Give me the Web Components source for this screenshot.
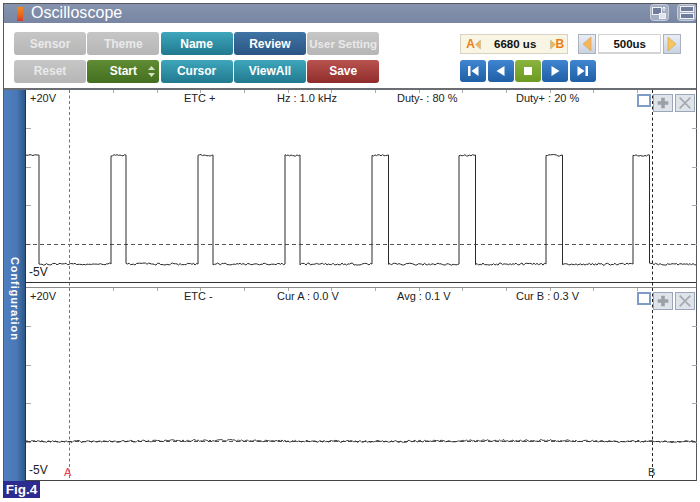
<!DOCTYPE html>
<html>
<head>
<meta charset="utf-8">
<title>Oscilloscope</title>
<style>
  html, body { margin: 0; padding: 0; background: #fff; }
  body { font-family: "Liberation Sans", Arial, sans-serif; }
</style>
</head>
<body>
<osc-window>
  <osc-titlebar slot="title">Oscilloscope</osc-titlebar>
  <osc-toolbar slot="toolbar">
    <osc-btn tone="gray">Sensor</osc-btn>
    <osc-btn tone="gray">Theme</osc-btn>
    <osc-btn tone="teal">Name</osc-btn>
    <osc-btn tone="navy">Review</osc-btn>
    <osc-btn tone="gray" small>User Setting</osc-btn>
    <osc-btn tone="gray">Reset</osc-btn>
    <osc-btn tone="green" spin>Start</osc-btn>
    <osc-btn tone="teal">Cursor</osc-btn>
    <osc-btn tone="teal">ViewAll</osc-btn>
    <osc-btn tone="red">Save</osc-btn>
    <osc-controls slot="right"></osc-controls>
  </osc-toolbar>
  <osc-scope slot="scope">
    <osc-plot kind="pulse">
      <span>+20V</span><span>ETC +</span><span>Hz : 1.0 kHz</span><span>Duty- : 80 %</span><span>Duty+ : 20 %</span>
    </osc-plot>
    <osc-plot kind="flat">
      <span>+20V</span><span>ETC -</span><span>Cur A : 0.0 V</span><span>Avg : 0.1 V</span><span>Cur B : 0.3 V</span>
    </osc-plot>
  </osc-scope>
</osc-window>
<fig-tag>Fig.4</fig-tag>

<script>
class OscWindow extends HTMLElement {
  constructor() {
    super();
    this.attachShadow({mode: "open"}).innerHTML = `
      <style>
        :host { display: block; width: 694px; height: 478px; margin: 3px 0 0 3px; box-sizing: border-box;
                border: solid #55585f; border-width: 1px 1px 0 1px; background: #fff; }
        .wrap { display: flex; flex-direction: column; height: 100%; }
      </style>
      <div class="wrap">
        <slot name="title"></slot>
        <slot name="toolbar"></slot>
        <slot name="scope"></slot>
      </div>`;
  }
}

class OscTitlebar extends HTMLElement {
  constructor() {
    super();
    this.attachShadow({mode: "open"}).innerHTML = `
      <style>
        :host { display: flex; align-items: center; height: 19px; flex: none; box-sizing: border-box;
                background: linear-gradient(#8593ae, #7886a3); color: #fff; font-size: 16px; padding-left: 13px; }
        .icon { width: 6px; height: 14px; margin-right: 8px; margin-top: 1px;
                background: linear-gradient(#f08a1e, #e8641c 60%, #d8392a); }
        .text { flex: 1; letter-spacing: 0.05px; margin-top: -1px; }
        .tools { display: flex; gap: 8px; margin-right: 0; align-self: flex-start; }
        svg { display: block; }
      </style>
      <span class="icon"></span>
      <span class="text"><slot></slot></span>
      <span class="tools">
        <svg width="19" height="17" viewBox="0 0 19 17">
          <rect x="0.5" y="0.5" width="18" height="16" rx="3" fill="#a4aec3" stroke="#c6ccd9"/>
          <rect x="2.5" y="3.5" width="9" height="7" fill="#6f7d9a" stroke="#eef1f6"/>
          <rect x="9.5" y="9.5" width="6" height="5" fill="#dfe4ee" stroke="#eef1f6"/>
          <path d="M14 3v4M12.5 4.5 14 3l1.5 1.5" fill="none" stroke="#fff"/>
        </svg>
        <svg width="19" height="17" viewBox="0 0 19 17">
          <rect x="0.5" y="0.5" width="18" height="16" rx="3" fill="#a4aec3" stroke="#c6ccd9"/>
          <rect x="3.5" y="2.5" width="13" height="5" fill="#6f7d9a" stroke="#eef1f6"/>
          <rect x="3.5" y="9.5" width="13" height="5" fill="#6f7d9a" stroke="#eef1f6"/>
        </svg>
      </span>`;
  }
}

class OscToolbar extends HTMLElement {
  constructor() {
    super();
    this.attachShadow({mode: "open"}).innerHTML = `
      <style>
        :host { display: flex; flex: none; height: 67px; box-sizing: border-box; padding: 9px 0 0 10px;
                border-bottom: 2px solid #6a6d72; }
        .grid { display: grid; grid-template-columns: repeat(5, 72px); grid-auto-rows: 23px; column-gap: 1.3px; row-gap: 4.5px; }
        .right { margin-left: 81px; }
      </style>
      <div class="grid"><slot></slot></div>
      <div class="right"><slot name="right"></slot></div>`;
  }
}

const TONES = {
  gray: "linear-gradient(#c6c6c6, #b6b6b6)",
  teal: "linear-gradient(#3ea6bb, #21798f)",
  navy: "linear-gradient(#3f74a4, #2a5583)",
  green: "linear-gradient(#5f8c33, #446f20)",
  red: "linear-gradient(#b9534e, #8f2c2b)"
};

class OscBtn extends HTMLElement {
  constructor() {
    super();
    const tone = this.getAttribute("tone") || "gray";
    const colour = tone == "gray" ? "#e9e9e9" : "#fff";
    const size = this.hasAttribute("small") ? "11.5px" : "12px";
    const spin = this.hasAttribute("spin")
      ? `<svg class="spin" width="7" height="11" viewBox="0 0 7 11"><path d="M3.5 0 7 4H0zM0 7h7l-3.5 4z" fill="#d5e0c4"/></svg>` : "";
    this.attachShadow({mode: "open"}).innerHTML = `
      <style>
        :host { display: flex; align-items: center; justify-content: center; position: relative; border-radius: 3px;
                font-size: ${size}; font-weight: bold; color: ${colour}; background: ${TONES[tone]}; white-space: nowrap; overflow: hidden; }
        .spin { position: absolute; right: 4px; top: 6px; }
      </style>
      <slot></slot>${spin}`;
  }
}

class OscControls extends HTMLElement {
  constructor() {
    super();
    const arrow = (dir, c) => `<svg width="12" height="16" viewBox="0 0 12 16"><path d="${dir == "l" ? "M10 1 2 8l8 7z" : "M2 1l8 7-8 7z"}" fill="${c}" stroke="#c9a060" stroke-width=".6"/></svg>`;
    const small = (dir) => `<svg width="6" height="11" viewBox="0 0 6 11"><path d="${dir == "l" ? "M5.5 1 .5 5.5l5 4.5z" : "M.5 1l5 4.5-5 4.5z"}" fill="#f0b45a" stroke="#b9b08c" stroke-width=".5"/></svg>`;
    const icons = {
      first: `<path d="M8 6h2.5v10H8zM18.5 6v10l-7-5z" fill="#fff"/>`,
      prev: `<path d="M16.5 6v10l-8-5z" fill="#fff"/>`,
      stop: `<rect x="9" y="7" width="8" height="8" fill="#fff"/>`,
      next: `<path d="M9.5 6v10l8-5z" fill="#fff"/>`,
      last: `<path d="M7.5 6v10l7-5zM15.5 6H18v10h-2.5z" fill="#fff"/>`
    };
    const play = (name, tone) => `<button class="${tone}"><svg width="26" height="22" viewBox="0 0 26 22">${icons[name]}</svg></button>`;
    this.attachShadow({mode: "open"}).innerHTML = `
      <style>
        :host { display: flex; flex-direction: column; gap: 6px; padding-top: 2px; font-weight: bold; font-size: 11.5px; color: #111; }
        .row { display: flex; align-items: center; height: 20px; }
        .ab { display: flex; align-items: center; width: 108px; height: 20px; box-sizing: border-box; padding: 0 3px 0 5px;
              background: #f8f5e4; border: 1px solid #d6d3c0; }
        .ab b { color: #ef7d14; font-size: 12px; font-weight: bold; }
        .ab .val { flex: 1; text-align: center; }
        .step { width: 18px; height: 20px; box-sizing: border-box; display: flex; align-items: center; justify-content: center;
                background: linear-gradient(#e9eef5, #c9d2e0); border: 1px solid #aab2c0; margin-left: 10px; }
        .val2 { width: 63px; height: 20px; box-sizing: border-box; margin: 0 2px; text-align: center; line-height: 18px; border: 1px solid #d4d4d4; border-bottom-width: 2px; }
        .step.r { margin-left: 0; }
        .play { display: flex; gap: 1.4px; height: 22px; }
        button { width: 26px; height: 22px; padding: 0; border: 0; border-radius: 3px; display: block; }
        button svg { display: block; }
        .blue { background: linear-gradient(#3f85cf, #1f5fa5); }
        .lime { background: linear-gradient(#8ab43e, #6b9a22); }
      </style>
      <div class="row">
        <div class="ab"><b>A</b>${small("l")}<span class="val">6680 us</span>${small("r")}<b>B</b></div>
        <div class="step">${arrow("l", "#f5b65c")}</div>
        <div class="val2">500us</div>
        <div class="step r">${arrow("r", "#f5c65c")}</div>
      </div>
      <div class="play">${play("first", "blue")}${play("prev", "blue")}${play("stop", "lime")}${play("next", "blue")}${play("last", "blue")}</div>`;
  }
}

class OscScope extends HTMLElement {
  constructor() {
    super();
    this.attachShadow({mode: "open"}).innerHTML = `
      <style>
        :host { display: flex; flex: 1; min-height: 0; position: relative; }
        .side { flex: none; width: 21px; display: flex; align-items: center; justify-content: center;
                background: linear-gradient(90deg, #4e7fc0, #4a78b6 60%, #2b5888); border-right: 1px solid #1e3552; }
        .side span { writing-mode: vertical-rl; color: #fff; font-size: 11px; font-weight: bold; letter-spacing: 0.9px; margin-top: 27px; }
        .plots { flex: 1; display: flex; flex-direction: column; min-width: 0; border-bottom: 1px solid #444; }
        .cursors { position: absolute; left: 22px; top: 0; pointer-events: none; }
      </style>
      <div class="side"><span>Configuration</span></div>
      <div class="plots"><slot></slot></div>
      <svg class="cursors" width="671" height="390" viewBox="26 92 671 390">
        <path d="M69.5 92V481" stroke="#e8424a" stroke-dasharray="3 2.5" fill="none"/>
        <path d="M652.5 92V481" stroke="#222" stroke-dasharray="3 2.5" fill="none"/>
      </svg>`;
  }
}

// small seeded generator so both traces come out the same on every load
function noise(seed) {
  let s = seed;
  return () => {
    s = (s * 1103515245 + 12345) & 0x7fffffff;
    return (s >> 8) % 1000 / 1000;
  };
}

function pulseTrace() {
  const r = noise(7);
  const rises = [-50, 110, 197, 284, 372, 459, 546, 633];
  let d = "M26 157";
  let hi = true;
  for (let x = 27; x < 697; x += 1.5) {
    const on = rises.some(a => x >= a && x < a + (a < 0 ? 88 : 15.5));
    if (on != hi) {
      d += `L${x} ${hi ? 157 : 266}`;
      hi = on;
    }
    const y = hi ? 157 + r() * 1.6 - 0.5 : 265 + r() * 2.2;
    d += `L${x} ${y.toFixed(1)}`;
  }
  return d;
}

function flatTrace() {
  const r = noise(23);
  let d = "M26 443";
  for (let x = 27; x < 697; x += 1.5) {
    const y = 443 + Math.sin(x / 47) * 0.5 + r() * 2 - 1;
    d += `L${x} ${y.toFixed(1)}`;
  }
  return d;
}

class OscPlot extends HTMLElement {
  constructor() {
    super();
    const pulse = this.getAttribute("kind") == "pulse";
    const top = pulse ? 92 : 290;
    const h = pulse ? 193 : 191;
    const zero = pulse ? 246.5 : 443.5;
    const trace = pulse ? pulseTrace() : flatTrace();
    let ticks = "";
    for (let i = 0; i < 13; i++) {
      const x = Math.round(113 + i * 43.65) + 0.5;
      ticks += `M${x} ${top}v3`;
    }
    for (let i = 1; i < 5; i++) {
      const y = Math.round(top + i * 38.4) + 0.5;
      ticks += `M26 ${y}h5M692 ${y}h5`;
    }
    this.attachShadow({mode: "open"}).innerHTML = `
      <style>
        :host { display: block; position: relative; box-sizing: border-box; height: ${h}px; flex: none;
                font-size: 11px; color: #222; ${pulse ? "border-bottom: 1px solid #333; margin-bottom: 4px;" : "border-top: 1px solid #8a8a8a;"} margin-top: ${pulse ? 0 : 0}px; }
        .head { display: grid; grid-template-columns: 154px 93px 120px 119px auto; padding: 2px 0 0 4px; line-height: 13px; position: relative; }
        svg.plot { position: absolute; left: 0; top: 0; }
        .yl { position: absolute; left: 3px; bottom: ${pulse ? 3 : 1}px; font-size: 12px; }
        .mark { position: absolute; bottom: 0; font-size: 11px; line-height: 11px; }
        .tools { position: absolute; left: 611px; top: 4px; display: flex; align-items: flex-start; gap: 1px; }
        .check { width: 14px; height: 13px; box-sizing: border-box; border: 2px solid #7e9cc8; background: #fff; }
        .tool { width: 20px; height: 18px; box-sizing: border-box; background: #dfe4ea; border: 1px solid #9aa7bb; margin-left: 1px; display: block; }
      </style>
      <svg class="plot" width="671" height="${h}" viewBox="26 ${top} 671 ${h}">
        <path d="${ticks}" stroke="#aaa" fill="none"/>
        <path d="M26 ${zero}H697" stroke="#555" stroke-dasharray="4 3" fill="none"/>
        <path d="${trace}" stroke="#2a2a2a" stroke-width="${pulse ? 1 : 0.9}" fill="none"/>
      </svg>
      <div class="head"><slot></slot></div>
      <span class="yl">-5V</span>
      ${pulse ? "" : `<span class="mark" style="left:38px;color:#e8424a">A</span><span class="mark" style="left:622px;color:#333">B</span>`}
      <div class="tools">
        <span class="check"></span>
        <svg class="tool" viewBox="0 0 20 18"><path d="M8 3h4v4h4v4h-4v4H8v-4H4V7h4z" fill="#9aa0a8"/></svg>
        <svg class="tool" viewBox="0 0 20 18"><path d="M4 3l12 12M16 3 4 15" stroke="#a6abb2" stroke-width="2"/></svg>
      </div>`;
  }
}

class FigTag extends HTMLElement {
  constructor() {
    super();
    this.attachShadow({mode: "open"}).innerHTML = `
      <style>
        :host { display: block; width: 37px; height: 17px; margin-left: 3px; background: #2c2c90; color: #fff;
                font-size: 13.5px; font-weight: bold; line-height: 17px; text-align: center; }
      </style>
      <slot></slot>`;
  }
}

customElements.define("osc-window", OscWindow);
customElements.define("osc-titlebar", OscTitlebar);
customElements.define("osc-toolbar", OscToolbar);
customElements.define("osc-btn", OscBtn);
customElements.define("osc-controls", OscControls);
customElements.define("osc-scope", OscScope);
customElements.define("osc-plot", OscPlot);
customElements.define("fig-tag", FigTag);
</script>
</body>
</html>
